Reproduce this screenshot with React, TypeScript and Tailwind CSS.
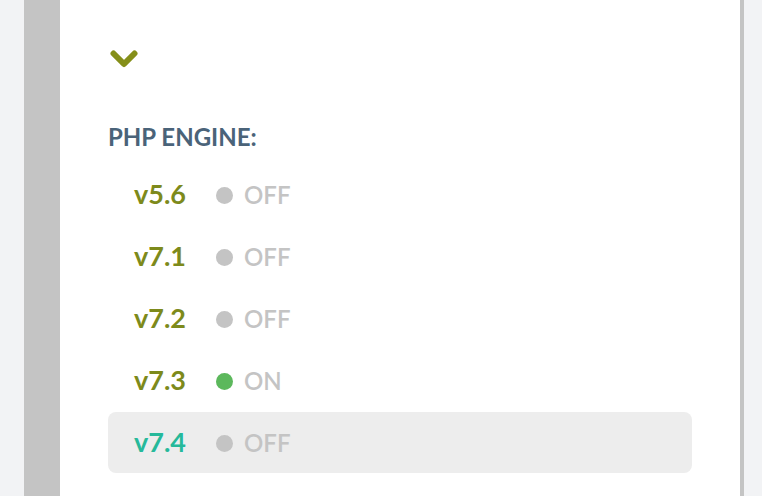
import React from 'react';

type Engine = { version: string; on: boolean; active?: boolean };

const engines: Engine[] = [
  { version: 'v5.6', on: false },
  { version: 'v7.1', on: false },
  { version: 'v7.2', on: false },
  { version: 'v7.3', on: true },
  { version: 'v7.4', on: false, active: true },
];

const EngineRow: React.FC<{ engine: Engine }> = ({ engine }) => (
  <div
    className={`flex items-center h-[61px] mb-[1px] pl-[26px] rounded-lg ${
      engine.active ? 'bg-[#ededed]' : ''
    }`}
  >
    <span
      className={`w-[82px] text-[27px] font-bold ${
        engine.active ? 'text-[#26b99a]' : 'text-[#7d8a1b]'
      }`}
    >
      {engine.version}
    </span>
    <span
      className={`w-[17px] h-[17px] rounded-full translate-y-[1px] ${
        engine.on ? 'bg-[#5cb85c]' : 'bg-[#c4c4c4]'
      }`}
    />
    <span className="ml-[11px] text-[24px] font-semibold text-[#c4c4c4]">
      {engine.on ? 'ON' : 'OFF'}
    </span>
  </div>
);

export default function App() {
  return (
    <div
      className="flex h-[496px] w-[762px] overflow-hidden bg-[#f2f3f5]"
      style={{ fontFamily: 'Lato, "Open Sans", sans-serif' }}
    >
      <div className="w-[24px] shrink-0" />
      <div className="w-[36px] shrink-0 bg-[#c4c4c4]" />
      <div className="w-[684px] shrink-0 bg-white border-r-4 border-[#c4c4c4] px-[48px] pt-[50px]">
        <svg width="28" height="18" viewBox="0 0 28 18" className="ml-[2px]">
          <polyline
            points="3.5,3.5 14,14 24.5,3.5"
            fill="none"
            stroke="#858f19"
            strokeWidth="6"
            strokeLinecap="round"
            strokeLinejoin="round"
          />
        </svg>
        <h2 className="mt-[54px] text-[24px] leading-[29px] font-bold text-[#4a6379]">
          PHP ENGINE:
        </h2>
        <div className="mt-[13px]">
          {engines.map((e) => (
            <EngineRow key={e.version} engine={e} />
          ))}
        </div>
      </div>
    </div>
  );
}
